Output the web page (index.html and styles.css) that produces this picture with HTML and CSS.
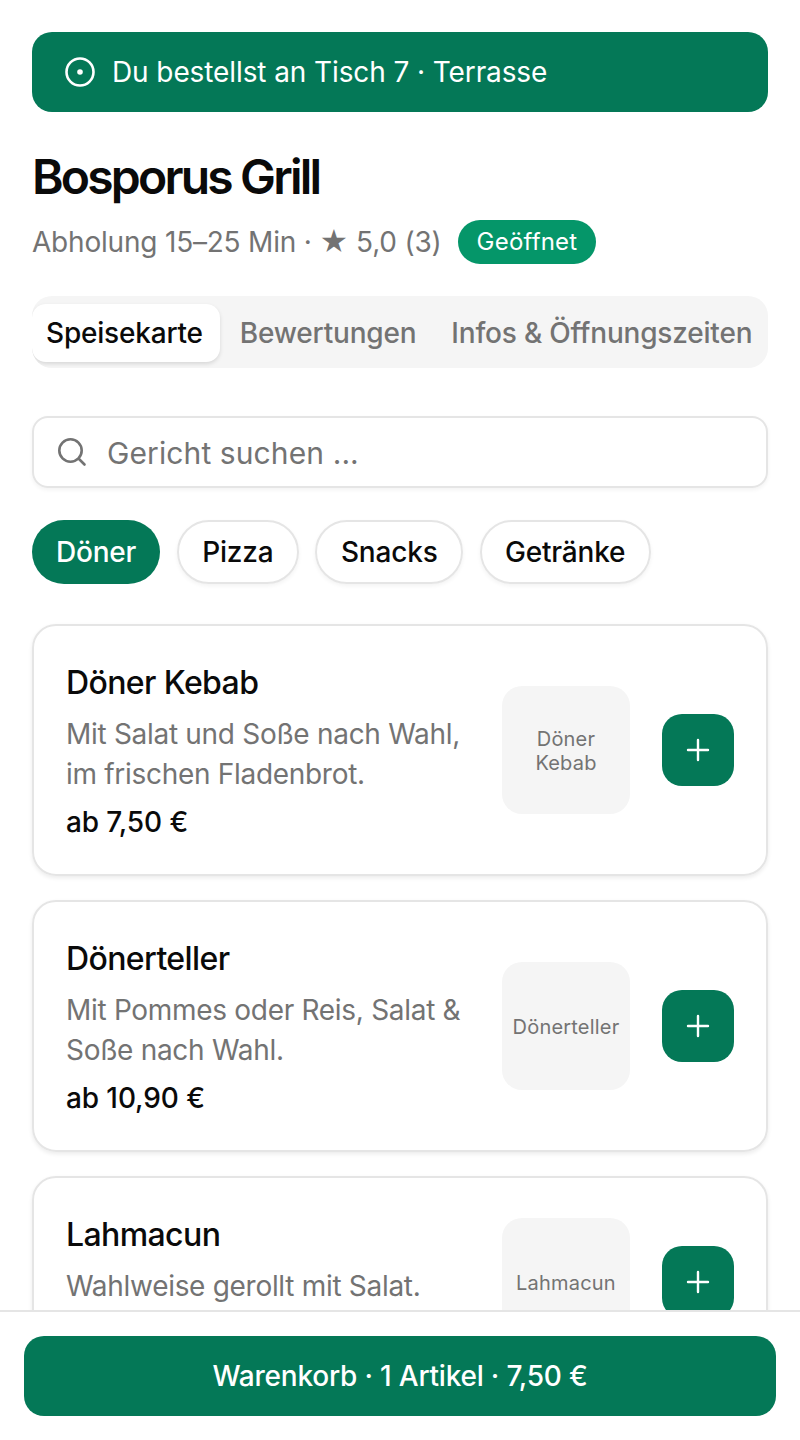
FILE: index.html
```html
<!DOCTYPE html>
<html lang="de">
<head>
    <meta charset="UTF-8">
    <meta name="viewport" content="width=device-width, initial-scale=1.0">
    <title>Bosporus Grill</title>
    <link rel="stylesheet" href="styles.css">
</head>
<body>
    <main class="page">
        <!-- Tisch-Hinweis -->
        <div class="table-banner">
            <svg class="table-icon" width="32" height="32" viewBox="0 0 32 32" fill="none">
                <circle cx="16" cy="16" r="13.5" stroke="currentColor" stroke-width="2.6"/>
                <circle cx="16" cy="16" r="2.8" fill="currentColor"/>
            </svg>
            <span>Du bestellst an Tisch 7 · Terrasse</span>
        </div>

        <h1 class="title">Bosporus Grill</h1>
        <div class="meta">
            <span>Abholung 15–25 Min · <span class="star">★</span> 5,0 (3)</span>
            <span class="badge">Geöffnet</span>
        </div>

        <nav class="tabs">
            <span class="tab active">Speisekarte</span>
            <span class="tab">Bewertungen</span>
            <span class="tab">Infos &amp; Öffnungszeiten</span>
        </nav>

        <div class="search">
            <svg width="32" height="32" viewBox="0 0 32 32" fill="none" stroke="currentColor" stroke-width="2.6" stroke-linecap="round">
                <circle cx="14.5" cy="14.5" r="11.2"/>
                <path d="M23 23 L28.5 28.5"/>
            </svg>
            <span class="search-text">Gericht suchen ...</span>
        </div>

        <div class="chips">
            <span class="chip active">Döner</span>
            <span class="chip">Pizza</span>
            <span class="chip">Snacks</span>
            <span class="chip">Getränke</span>
        </div>

        <!-- Gerichte -->
        <section class="dishes">
            <article class="dish">
                <div class="dish-info">
                    <h2 class="dish-name">Döner Kebab</h2>
                    <p class="dish-desc">Mit Salat und Soße nach Wahl, im frischen Fladenbrot.</p>
                    <div class="dish-price">ab 7,50 €</div>
                </div>
                <div class="dish-thumb">Döner Kebab</div>
                <button class="add" type="button">
                    <svg width="24" height="24" viewBox="0 0 24 24" fill="none" stroke="currentColor" stroke-width="2.4" stroke-linecap="round"><path d="M12 2v20M2 12h20"/></svg>
                </button>
            </article>
            <article class="dish">
                <div class="dish-info">
                    <h2 class="dish-name">Dönerteller</h2>
                    <p class="dish-desc">Mit Pommes oder Reis, Salat &amp; Soße nach Wahl.</p>
                    <div class="dish-price">ab 10,90 €</div>
                </div>
                <div class="dish-thumb">Dönerteller</div>
                <button class="add" type="button">
                    <svg width="24" height="24" viewBox="0 0 24 24" fill="none" stroke="currentColor" stroke-width="2.4" stroke-linecap="round"><path d="M12 2v20M2 12h20"/></svg>
                </button>
            </article>
            <article class="dish">
                <div class="dish-info">
                    <h2 class="dish-name">Lahmacun</h2>
                    <p class="dish-desc">Wahlweise gerollt mit Salat.</p>
                    <div class="dish-price">ab 6,50 €</div>
                </div>
                <div class="dish-thumb">Lahmacun</div>
                <button class="add" type="button">
                    <svg width="24" height="24" viewBox="0 0 24 24" fill="none" stroke="currentColor" stroke-width="2.4" stroke-linecap="round"><path d="M12 2v20M2 12h20"/></svg>
                </button>
            </article>
        </section>
    </main>

    <!-- Warenkorb -->
    <footer class="cart-bar">
        <button class="cart-button" type="button">Warenkorb · 1 Artikel · 7,50 €</button>
    </footer>
</body>
</html>
```

FILE: styles.css
```css
/* Seite */
html, body {
    height: 100%;
    margin: 0;
    overflow: hidden;
}
body {
    font-family: Inter, "Liberation Sans", sans-serif;
    background-color: #fff;
    color: #0a0a0a;
}
.page {
    padding: 32px;
}

/* Tisch-Hinweis */
.table-banner {
    display: flex;
    align-items: center;
    gap: 16px;
    height: 80px;
    padding: 0 32px;
    box-sizing: border-box;
    background-color: #047857;
    color: #fff;
    border-radius: 20px;
    font-size: 28px;
    letter-spacing: -0.1px;
}
.table-icon {
    flex-shrink: 0;
}

/* Kopf */
.title {
    margin: 35px 0 0;
    font-size: 48px;
    line-height: 60px;
    font-weight: 600;
    letter-spacing: -2.8px;
}
.meta {
    display: flex;
    align-items: center;
    gap: 16px;
    margin-top: 13px;
    font-size: 28px;
    letter-spacing: -0.2px;
    color: #737373;
}
.star {
    font-size: 28px;
    line-height: 28px;
}
.badge {
    padding: 0 19px;
    height: 44px;
    line-height: 44px;
    border-radius: 22px;
    background-color: #059669;
    color: #fff;
    font-size: 24px;
    font-weight: 400;
    letter-spacing: 0.2px;
}

/* Tabs */
.tabs {
    display: flex;
    align-items: flex-start;
    gap: 5px;
    height: 72px;
    margin-top: 32px;
    padding: 8px 0 0;
    box-sizing: border-box;
    background-color: #f5f5f5;
    border-radius: 20px;
    white-space: nowrap;
    overflow: hidden;
}
.tab {
    padding: 0 15px;
    height: 58px;
    line-height: 58px;
    font-size: 28px;
    font-weight: 450;
    letter-spacing: -0.2px;
    color: #737373;
    border-radius: 14px;
}
.tab.active {
    padding: 0 17px 0 14px;
    background-color: #fff;
    color: #0a0a0a;
    box-shadow: 0 2px 4px rgba(0, 0, 0, 0.12);
}

/* Suche */
.search {
    display: flex;
    align-items: center;
    gap: 19px;
    height: 72px;
    margin-top: 48px;
    padding: 0 22px;
    box-sizing: border-box;
    border: 2px solid #e5e5e5;
    border-radius: 16px;
    box-shadow: 0 2px 4px rgba(0, 0, 0, 0.05);
    color: #737373;
    font-size: 30px;
    letter-spacing: 0.1px;
}
.search-text {
    padding-top: 2px;
}

/* Kategorien */
.chips {
    display: flex;
    gap: 16.5px;
    margin-top: 32px;
}
.chip {
    height: 64px;
    line-height: 60px;
    padding: 0 23.5px;
    box-sizing: border-box;
    border: 2px solid #e5e5e5;
    border-radius: 32px;
    box-shadow: 0 2px 4px rgba(0, 0, 0, 0.05);
    font-size: 28px;
    font-weight: 450;
    letter-spacing: -0.2px;
}
.chip.active {
    padding: 0 24px;
    line-height: 64px;
    background-color: #047857;
    border: none;
    color: #fff;
    box-shadow: none;
}

/* Gerichte */
.dishes {
    display: flex;
    flex-direction: column;
    gap: 24px;
    margin-top: 40px;
}
.dish {
    display: flex;
    align-items: center;
    padding: 32px;
    border: 2px solid #e5e5e5;
    border-radius: 24px;
    box-shadow: 0 2px 4px rgba(0, 0, 0, 0.08);
}
.dish-info {
    flex: 1;
    min-width: 0;
    padding: 0 24px 2px 0;
}
.dish-name {
    margin: 0;
    font-size: 32px;
    line-height: 50px;
    font-weight: 450;
    letter-spacing: -0.6px;
}
.dish-desc {
    margin: 6px 0 0;
    font-size: 28px;
    line-height: 40px;
    letter-spacing: -0.3px;
    color: #737373;
}
.dish-price {
    margin-top: 10px;
    font-size: 28px;
    line-height: 36px;
    font-weight: 450;
    letter-spacing: -0.1px;
}
.dish-thumb {
    display: flex;
    align-items: center;
    justify-content: center;
    flex-shrink: 0;
    width: 128px;
    height: 128px;
    padding: 10px 8px 8px;
    box-sizing: border-box;
    background-color: #f5f5f5;
    border-radius: 20px;
    text-align: center;
    font-size: 20px;
    line-height: 24px;
    letter-spacing: 0.2px;
    color: #737373;
}
.add {
    display: flex;
    align-items: center;
    justify-content: center;
    flex-shrink: 0;
    width: 72px;
    height: 72px;
    margin-left: 32px;
    padding: 0;
    border: none;
    border-radius: 20px;
    background-color: #047857;
    color: #fff;
}

/* Warenkorb */
.cart-bar {
    position: fixed;
    left: 0;
    right: 0;
    bottom: 0;
    height: 130px;
    padding: 24px 24px 0;
    box-sizing: border-box;
    background-color: #fff;
    border-top: 2px solid #e5e5e5;
}
.cart-button {
    display: block;
    width: 100%;
    height: 80px;
    border: none;
    border-radius: 20px;
    background-color: #047857;
    color: #fff;
    font-family: inherit;
    font-size: 28px;
    font-weight: 450;
    letter-spacing: -0.2px;
}
```
